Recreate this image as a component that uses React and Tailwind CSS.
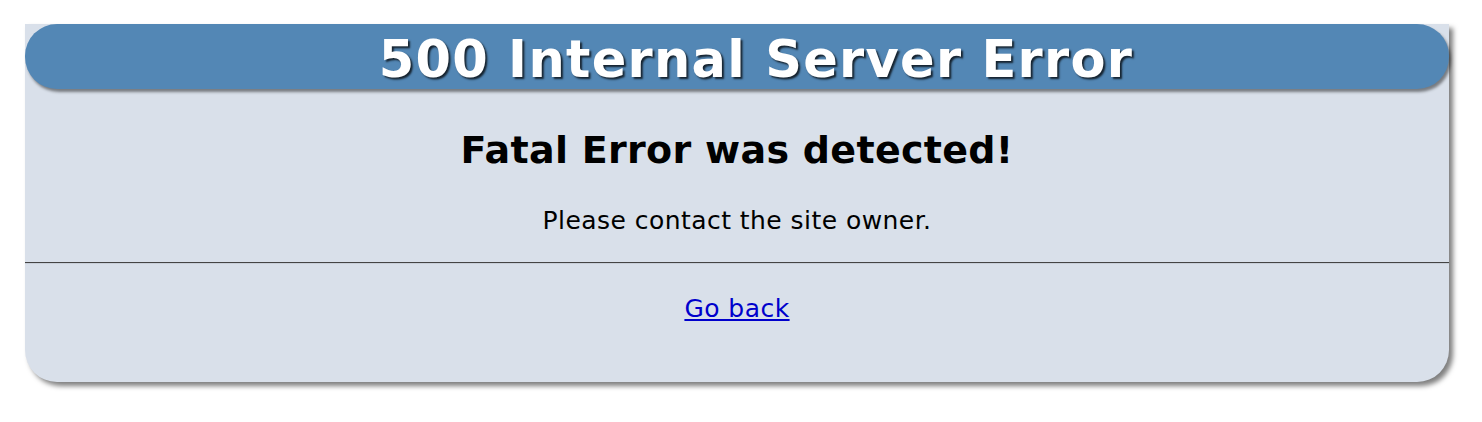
import React from 'react'

export default function App() {
  return (
    <div className="min-h-screen bg-white pt-[24px] pl-[25px]" style={{ fontFamily: '"DejaVu Sans", Verdana, sans-serif' }}>
      <div className="w-[1424px] bg-[#d9e0ea] rounded-b-[32px] shadow-[4px_4px_5px_rgba(0,0,0,0.5)]">
        {/* Header */}
        <div className="h-[65px] pt-[5px] pl-[38px] rounded-[32px] bg-[#5387b5] shadow-[2px_3px_3px_rgba(0,0,0,0.45)] flex items-center justify-center">
          <h1 className="text-white font-bold text-[51px] leading-none tracking-[1.3px] [text-shadow:2px_2px_2px_rgba(0,0,0,0.75)]">
            500 Internal Server Error
          </h1>
        </div>

        <div className="flex flex-col items-center pt-[42px]">
          <h2 className="font-bold text-[38px] leading-none tracking-[0.3px] text-black">Fatal Error was detected!</h2>
          <p className="mt-[39px] text-[25px] leading-none tracking-[0.45px] text-black">Please contact the site owner.</p>
        </div>

        <div className="mt-[29px] border-t border-t-[#444] border-b border-b-[#c8cfd9]" />

        <div className="flex justify-center pt-[32px] pb-[61px]">
          <a href="#" className="text-[25px] leading-none tracking-[0.45px] text-[#0000cc] underline">Go back</a>
        </div>
      </div>
    </div>
  )
}
